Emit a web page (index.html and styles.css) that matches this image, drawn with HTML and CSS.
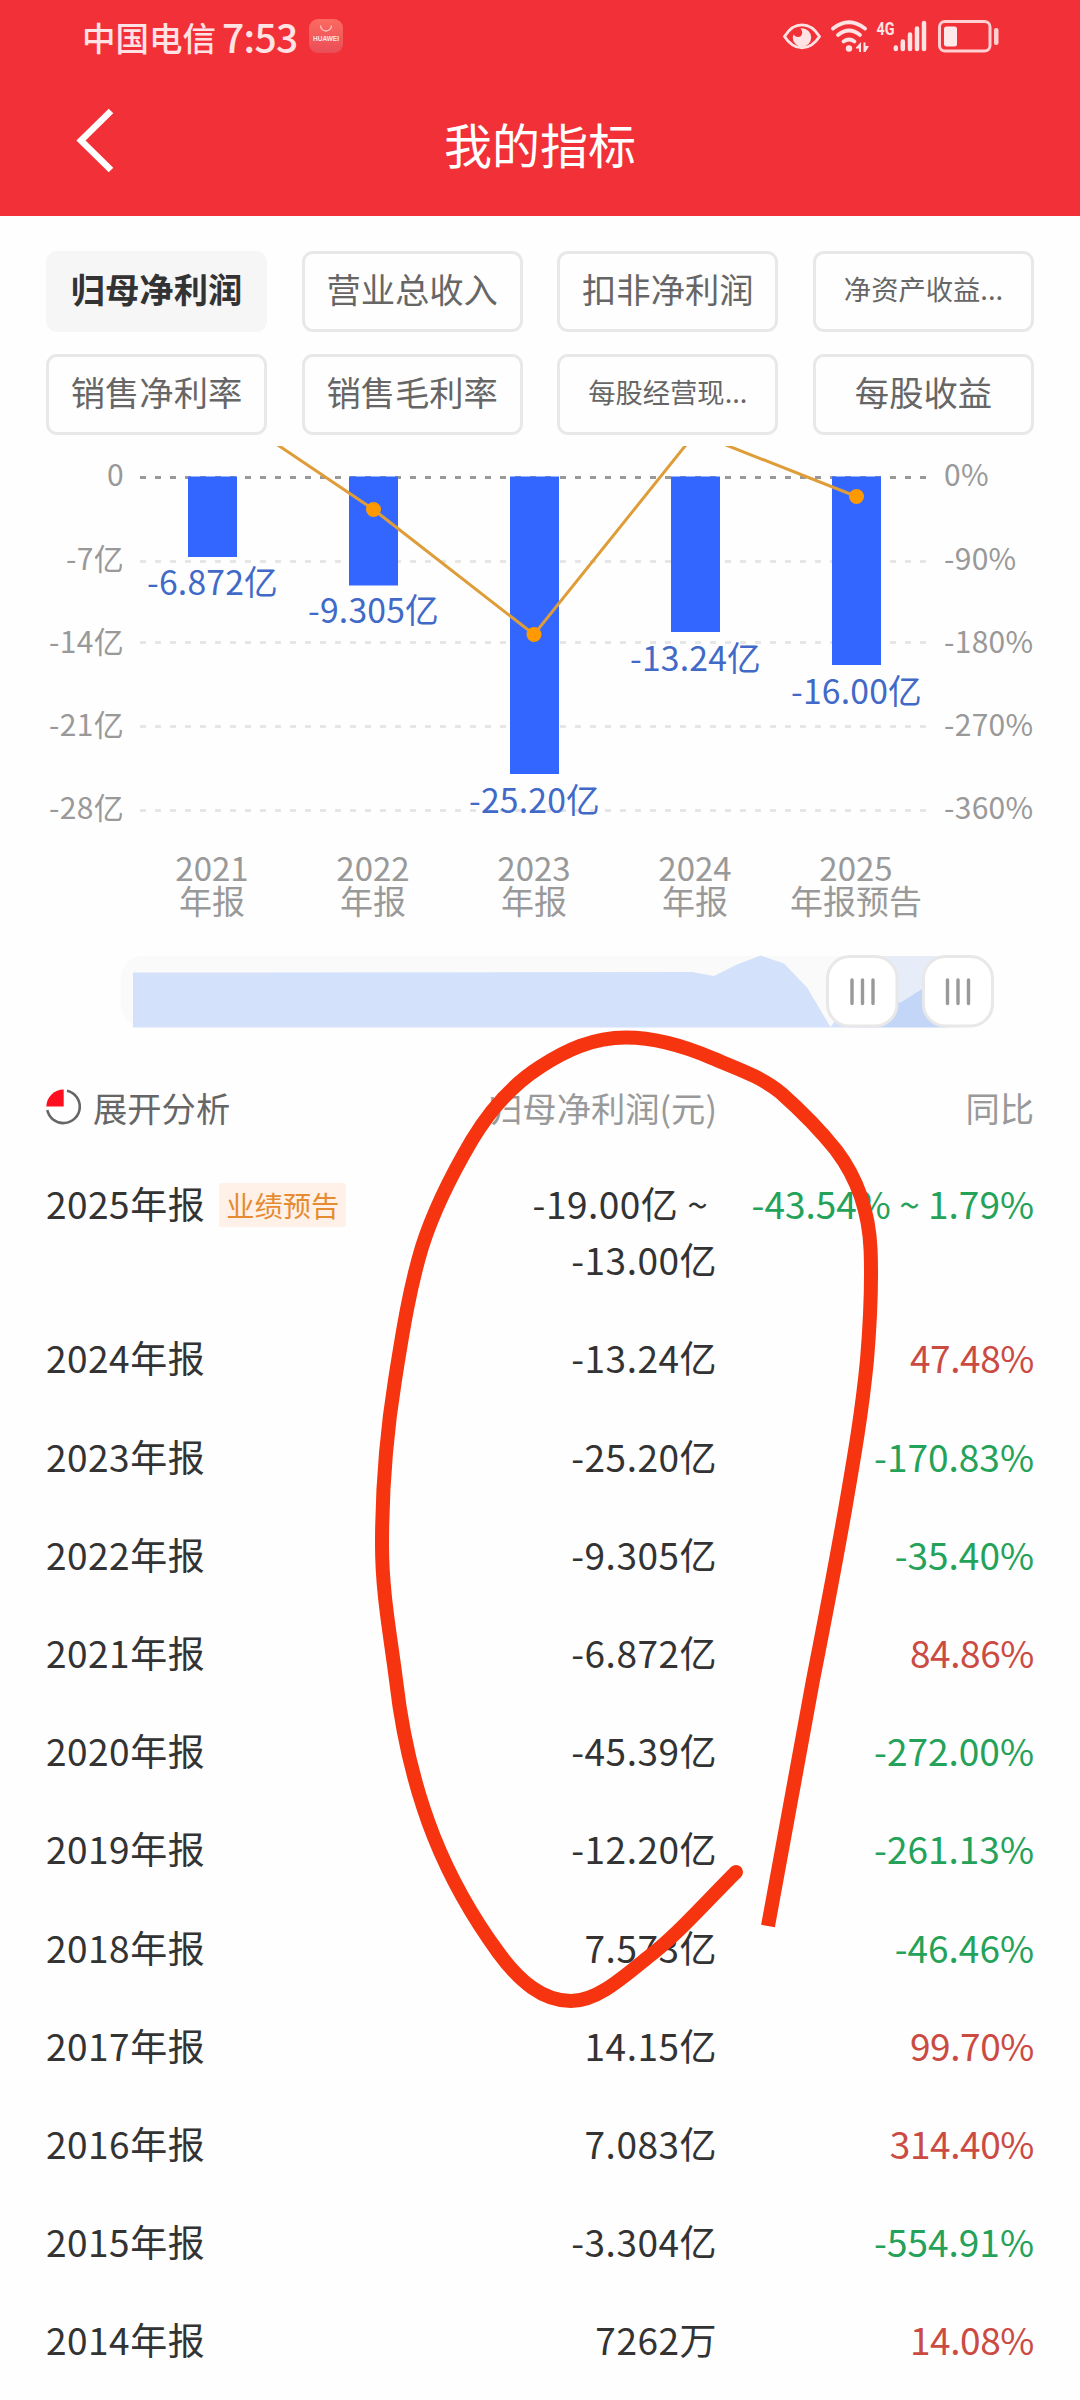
FILE: index.html
```html
<!DOCTYPE html>
<html lang="zh-CN">
<head>
    <meta charset="UTF-8">
    <meta name="viewport" content="width=device-width, initial-scale=1.0">
    <title>我的指标</title>
    <link rel="stylesheet" href="styles.css">
</head>
<body>
    <header class="main-header">
        <div class="status-bar">
            <span class="carrier">中国电信</span>
            <span class="clock">7:53</span>
            <svg class="app-badge" width="34" height="34" viewBox="0 0 34 34">
                <defs>
                    <linearGradient id="badgeFill" x1="0" y1="0" x2="0" y2="1">
                        <stop offset="0" stop-color="#fb6a61"/>
                        <stop offset="1" stop-color="#ea4d57"/>
                    </linearGradient>
                </defs>
                <rect width="34" height="34" rx="9" fill="url(#badgeFill)"/>
                <path d="M11.500 6.500a5.500 5.500 0 0 0 11 0" fill="none" stroke="#ffc4c0" stroke-width="1.300"/>
                <text x="17" y="22" text-anchor="middle" textLength="26" lengthAdjust="spacingAndGlyphs" class="badge-text">HUAWEI</text>
            </svg>
            <svg class="status-icons" width="218" height="36" viewBox="782 18 218 36">
                <!-- eye -->
                <path d="M784.500 36.500C794 21 810 21 819.500 36.500C810 51.500 794 51.500 784.500 36.500Z" fill="none" stroke="#ffe3e4" stroke-width="2.800"/>
                <circle cx="802" cy="37.500" r="9.200" fill="#ffe3e4"/>
                <path d="M794 28l5.500-.500c4 3 3.500 9.500-1.500 9.500c-2 0-3.500-1-5.500-3.500z" fill="#f23038"/>
                <!-- wifi -->
                <g fill="none" stroke="#ffe3e4" stroke-width="3.800" stroke-linecap="round">
                    <path d="M833 28.500Q849 16 865 28.500"/>
                    <path d="M838 35Q849 26 860 35"/>
                    <path d="M843.500 41.500Q849 37.500 854.500 41.500"/>
                </g>
                <circle cx="849" cy="48.500" r="3.200" fill="#ffe3e4"/>
                <path d="M856 47.500l5-5.500v10h-2v-3.500h-3zM863.500 42.500h2v3.500h3.500l-3.500 6h-2z" fill="#ffe3e4"/>
                <text x="876.500" y="34.500" textLength="18" lengthAdjust="spacingAndGlyphs" class="net-text">4G</text>
                <!-- signal -->
                <g stroke="#ffe3e4" stroke-width="4.500" stroke-linecap="round">
                    <path d="M895.800 47.500v1.500M902.800 41.500v7.500M910 34.500v14.500M917 28.500v20.500M924 23v26"/>
                </g>
                <!-- battery -->
                <rect x="939.500" y="21.500" width="50.500" height="29.500" rx="5.500" fill="none" stroke="#ffd0d2" stroke-width="3"/>
                <rect x="944" y="26.500" width="13" height="20" rx="2.500" fill="#ffe9ea"/>
                <rect x="994" y="28" width="4.500" height="17" rx="2" fill="#ffd0d2"/>
            </svg>
        </div>
        <div class="title-bar">
            <svg class="back" width="40" height="68" viewBox="0 0 40 68">
                <path d="M37 4L7 33.500L37 63" fill="none" stroke="#fff" stroke-width="6.500"/>
            </svg>
            <h1>我的指标</h1>
        </div>
    </header>

    <nav class="tabs">
        <a class="tab active">归母净利润</a>
        <a class="tab">营业总收入</a>
        <a class="tab">扣非净利润</a>
        <a class="tab small">净资产收益...</a>
        <a class="tab">销售净利率</a>
        <a class="tab">销售毛利率</a>
        <a class="tab small">每股经营现...</a>
        <a class="tab">每股收益</a>
    </nav>

    <svg class="chart" width="1080" height="490" viewBox="0 446 1080 490">
        <g class="grid">
            <path class="zero" d="M140 477.500H926"/>
            <path d="M140 561.500H926"/>
            <path d="M140 642.500H926"/>
            <path d="M140 726.500H926"/>
            <path d="M140 810.500H926"/>
        </g>
        <g class="axis left">
            <text x="124" y="486">0</text>
            <text x="124" y="569.500">-7亿</text>
            <text x="124" y="652.500">-14亿</text>
            <text x="124" y="736">-21亿</text>
            <text x="124" y="819">-28亿</text>
        </g>
        <g class="axis">
            <text x="944" y="486">0%</text>
            <text x="944" y="569.500">-90%</text>
            <text x="944" y="652.500">-180%</text>
            <text x="944" y="736">-270%</text>
            <text x="944" y="819">-360%</text>
        </g>
        <g class="bars">
            <rect x="188" y="476.500" width="49" height="80.500"/>
            <rect x="349" y="476.500" width="49" height="109"/>
            <rect x="510" y="476.500" width="49" height="297.500"/>
            <rect x="671" y="476.500" width="49" height="155.500"/>
            <rect x="832" y="476.500" width="49" height="188.500"/>
        </g>
        <polyline class="trend" points="212.500,401 373.500,509.500 534,634.500 695.500,433 856.500,496.500"/>
        <g class="dots">
            <circle cx="373.500" cy="509.500" r="7.500"/>
            <circle cx="534" cy="634.500" r="7.500"/>
            <circle cx="856.500" cy="496.500" r="7.500"/>
        </g>
        <g class="values">
            <text x="212.500" y="595">-6.872亿</text>
            <text x="373.500" y="623">-9.305亿</text>
            <text x="534.500" y="812.500">-25.20亿</text>
            <text x="695.500" y="670.500">-13.24亿</text>
            <text x="856.500" y="703.500">-16.00亿</text>
        </g>
        <g class="years">
            <text><tspan x="212" y="881">2021</tspan><tspan x="212" y="914">年报</tspan></text>
            <text><tspan x="373" y="881">2022</tspan><tspan x="373" y="914">年报</tspan></text>
            <text><tspan x="534" y="881">2023</tspan><tspan x="534" y="914">年报</tspan></text>
            <text><tspan x="695" y="881">2024</tspan><tspan x="695" y="914">年报</tspan></text>
            <text><tspan x="856" y="881">2025</tspan><tspan x="856" y="914">年报预告</tspan></text>
        </g>
    </svg>

    <svg class="slider" width="1080" height="76" viewBox="0 954 1080 76">
        <path d="M960 956H143a22 22 0 0 0 -22 22v27a22 22 0 0 0 22 22H960Z" fill="#fafafa"/>
        <path d="M133 972.500L692 972L714 976L737 964.500L760.500 955.500L784 963.500L807 987.500L830.500 1027L853 996L876 985L900 1003L922 989L947 980V1027.500H133Z" fill="#d4e1fa"/>
        <rect x="862" y="956" width="96" height="71.500" fill="#3e73ea" opacity="0.1"/>
        <g fill="#fff" stroke="#e8e8e8" stroke-width="3">
            <rect x="827.500" y="956.500" width="69.500" height="69.500" rx="22"/>
            <rect x="923.500" y="956.500" width="69" height="69.500" rx="22"/>
        </g>
        <path d="M852 980v23.500M862.500 980v23.500M873 980v23.500M947.500 980v23.500M958 980v23.500M968.500 980v23.500" stroke="#999" stroke-width="3.400" stroke-linecap="round"/>
    </svg>

    <section class="report">
        <div class="row head">
            <span class="expand">
                <svg width="36" height="36" viewBox="0 0 36 36">
                    <path d="M17.700 .500V17.500H.300A17.400 17.400 0 0 1 17.700 .500Z" fill="#ff0e20"/>
                    <path d="M21 1.700A16.400 16.400 0 1 1 1.300 21" fill="none" stroke="#666" stroke-width="2.600"/>
                </svg>
                展开分析
            </span>
            <span>归母净利润(元)</span>
            <span>同比</span>
        </div>
        <div class="row">
            <span>2025年报<em class="notice">业绩预告</em></span>
            <span>-19.00亿 ~&nbsp;<br>-13.00亿</span>
            <span class="down">-43.54% ~ 1.79%</span>
        </div>
        <div class="row"><span>2024年报</span><span>-13.24亿</span><span class="up">47.48%</span></div>
        <div class="row"><span>2023年报</span><span>-25.20亿</span><span class="down">-170.83%</span></div>
        <div class="row"><span>2022年报</span><span>-9.305亿</span><span class="down">-35.40%</span></div>
        <div class="row"><span>2021年报</span><span>-6.872亿</span><span class="up">84.86%</span></div>
        <div class="row"><span>2020年报</span><span>-45.39亿</span><span class="down">-272.00%</span></div>
        <div class="row"><span>2019年报</span><span>-12.20亿</span><span class="down">-261.13%</span></div>
        <div class="row"><span>2018年报</span><span>7.573亿</span><span class="down">-46.46%</span></div>
        <div class="row"><span>2017年报</span><span>14.15亿</span><span class="up">99.70%</span></div>
        <div class="row"><span>2016年报</span><span>7.083亿</span><span class="up">314.40%</span></div>
        <div class="row"><span>2015年报</span><span>-3.304亿</span><span class="down">-554.91%</span></div>
        <div class="row"><span>2014年报</span><span>7262万</span><span class="up">14.08%</span></div>
    </section>

    <!-- hand-drawn marker over the profit column -->
    <svg class="marker" width="1080" height="2400" viewBox="0 0 1080 2400">
        <path d="M736 1872C702 1906 676 1936 647 1958C620 1980 596 2001 571 2001C543 2001 520 1982 498 1952C471 1915 450 1877 434 1837C415 1789 402 1732 396 1680C390 1633 382 1592 382 1545C382 1487 387 1430 395 1380C402 1336 409 1290 422 1247C434 1209 452 1174 472 1140C490 1110 512 1085 540 1067C566 1050 593 1037.500 626 1037.500C655 1037.500 684 1046 712 1058C738 1069 762 1077 781 1093C799 1109 820 1130 836 1150C858 1179 869 1212 870.600 1250C872 1287 870 1324 867 1360C862 1412 854 1458 845 1510C835 1567 824 1624 813 1680L768 1926"/>
        <circle cx="736" cy="1872" r="7"/>
    </svg>
</body>
</html>
```
FILE: styles.css
```css
* {
    margin: 0;
    padding: 0;
    box-sizing: border-box;
}

body {
    position: relative;
    width: 1080px;
    height: 2400px;
    overflow: hidden;
    background: #fefefe;
    color: #333;
    font-family: "Noto Sans CJK SC", "Noto Sans", sans-serif;
}

svg {
    display: block;
}

.main-header {
    height: 216px;
    background: #f23038;
    color: #fff;
}

.status-bar {
    display: flex;
    align-items: center;
    height: 72px;
    padding: 0 80px 0 82px;
    color: #ffe3e4;
}

.carrier {
    font-size: 33.5px;
    font-weight: 500;
}

.clock {
    margin-left: 6px;
    font-size: 39px;
    font-weight: 500;
    letter-spacing: -0.7px;
}

.app-badge {
    margin-left: 11px;
}

.badge-text {
    font: bold 6.5px "Liberation Sans", sans-serif;
    fill: #ffe3e4;
}

.net-text {
    font: bold 19px Roboto, sans-serif;
    fill: #ffe3e4;
}

.status-icons {
    margin-left: auto;
}

.title-bar {
    display: grid;
    grid-template-columns: 1fr auto 1fr;
    align-items: center;
    height: 142px;
    padding: 0 74px;
}

.title-bar h1 {
    font-size: 48px;
    font-weight: 400;
    line-height: 142px;
}

.back {
    margin-bottom: 4px;
}

.tabs {
    display: grid;
    grid-template-columns: repeat(4, 221px);
    grid-auto-rows: 81px;
    justify-content: space-between;
    row-gap: 22px;
    padding: 35px 46px 0;
    height: 230px;
}

.tab {
    border: 3px solid #e8e8e8;
    border-radius: 11px;
    color: #666;
    font-size: 34.3px;
    line-height: 68px;
    text-align: center;
    white-space: nowrap;
}

.tab.active {
    background: #f6f6f6;
    border-color: #f6f6f6;
    color: #333;
    font-weight: bold;
}

.tab.small {
    font-size: 27.3px;
}

.grid path {
    fill: none;
    stroke: #e6e6e6;
    stroke-width: 3;
    stroke-dasharray: 6 9;
}

.grid .zero {
    stroke: #999;
}

.axis text {
    fill: #999;
    font-size: 30px;
    letter-spacing: 0.3px;
}

.axis.left text {
    text-anchor: end;
}

.bars rect {
    fill: #3366ff;
}

.trend {
    fill: none;
    stroke: #df9d39;
    stroke-width: 3;
}

.dots circle {
    fill: #ff9900;
}

.values text {
    fill: #4169c8;
    font-size: 33.7px;
    letter-spacing: 0.2px;
    text-anchor: middle;
}

.years text {
    fill: #999;
    font-size: 33px;
    text-anchor: middle;
}

.slider {
    margin-top: 18px;
}

.report {
    padding: 0 46px;
}

.row {
    display: grid;
    grid-template-columns: 330px 341px 1fr;
    padding: 20px 0 22px;
    font-size: 37px;
    letter-spacing: 0.5px;
    line-height: 56.2px;
    white-space: nowrap;
}

.row span:nth-child(n + 2) {
    text-align: right;
}

.row.head {
    align-items: start;
    height: 125px;
    padding: 49px 0 0;
    color: #999;
    font-size: 34.3px;
    letter-spacing: 0;
}

.expand {
    display: flex;
    align-items: center;
    gap: 11px;
    color: #666;
}

.notice {
    display: inline-block;
    margin-left: 14px;
    padding: 0 7px;
    border-radius: 3px;
    background: #fff1e7;
    color: #e58b32;
    font-size: 28.3px;
    font-style: normal;
    letter-spacing: 0;
    line-height: 44px;
    vertical-align: 2px;
}

.up {
    color: #cb4b43;
    letter-spacing: -0.4px;
}

.down {
    color: #24a259;
    letter-spacing: 0;
}

.marker {
    position: absolute;
    top: 0;
    left: 0;
    pointer-events: none;
}

.marker path {
    fill: none;
    stroke: #f6340f;
    stroke-width: 14;
}

.marker circle {
    fill: #f6340f;
}
```
